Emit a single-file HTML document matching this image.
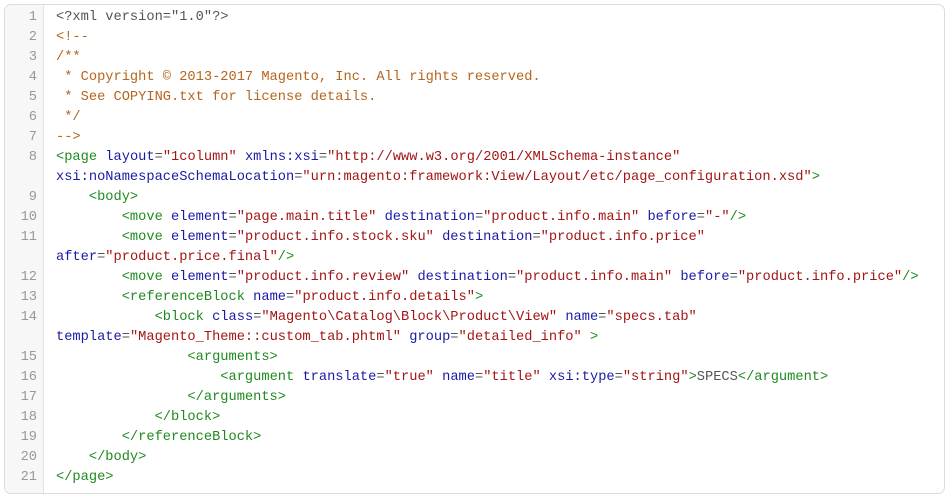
<!DOCTYPE html>
<html><head><meta charset="utf-8"><style>
html,body{margin:0;padding:0;background:#fff;width:950px;height:499px;overflow:hidden}
.box{position:absolute;left:4px;top:4px;width:939px;height:488px;border:1px solid #dcdcdc;border-radius:7px;overflow:hidden;background:#fff}
.gut{position:absolute;left:0;top:0;width:38px;height:100%;background:#f7f7f7;border-right:1px solid #e3e3e3}
.rows{position:absolute;left:0;top:3px;width:100%}
.r{position:relative;font-family:"Liberation Mono",monospace;font-size:13.7px;line-height:20px;white-space:pre;color:#555}
.n{position:absolute;left:0;width:32px;text-align:right;color:#999}
.c{margin-left:51px}
.t{color:#1f8a1f}.a{color:#1a1aa6}.v{color:#a31515}.m{color:#b5651d}
</style></head><body>
<div class="box"><div class="gut"></div><div class="rows">
<div class="r"><span class="n">1</span><div class="c">&lt;?xml version="1.0"?&gt;</div></div>
<div class="r"><span class="n">2</span><div class="c m">&lt;!--</div></div>
<div class="r"><span class="n">3</span><div class="c m">/**</div></div>
<div class="r"><span class="n">4</span><div class="c m"> * Copyright © 2013-2017 Magento, Inc. All rights reserved.</div></div>
<div class="r"><span class="n">5</span><div class="c m"> * See COPYING.txt for license details.</div></div>
<div class="r"><span class="n">6</span><div class="c m"> */</div></div>
<div class="r"><span class="n">7</span><div class="c m">--&gt;</div></div>
<div class="r"><span class="n">8</span><div class="c"><span class="t">&lt;page</span> <span class="a">layout</span>=<span class="v">"1column"</span> <span class="a">xmlns:xsi</span>=<span class="v">"http://www.w3.org/2001/XMLSchema-instance"</span>
<span class="a">xsi:noNamespaceSchemaLocation</span>=<span class="v">"urn:magento:framework:View/Layout/etc/page_configuration.xsd"</span><span class="t">&gt;</span></div></div>
<div class="r"><span class="n">9</span><div class="c">    <span class="t">&lt;body&gt;</span></div></div>
<div class="r"><span class="n">10</span><div class="c">        <span class="t">&lt;move</span> <span class="a">element</span>=<span class="v">"page.main.title"</span> <span class="a">destination</span>=<span class="v">"product.info.main"</span> <span class="a">before</span>=<span class="v">"-"</span><span class="t">/&gt;</span></div></div>
<div class="r"><span class="n">11</span><div class="c">        <span class="t">&lt;move</span> <span class="a">element</span>=<span class="v">"product.info.stock.sku"</span> <span class="a">destination</span>=<span class="v">"product.info.price"</span>
<span class="a">after</span>=<span class="v">"product.price.final"</span><span class="t">/&gt;</span></div></div>
<div class="r"><span class="n">12</span><div class="c">        <span class="t">&lt;move</span> <span class="a">element</span>=<span class="v">"product.info.review"</span> <span class="a">destination</span>=<span class="v">"product.info.main"</span> <span class="a">before</span>=<span class="v">"product.info.price"</span><span class="t">/&gt;</span></div></div>
<div class="r"><span class="n">13</span><div class="c">        <span class="t">&lt;referenceBlock</span> <span class="a">name</span>=<span class="v">"product.info.details"</span><span class="t">&gt;</span></div></div>
<div class="r"><span class="n">14</span><div class="c">            <span class="t">&lt;block</span> <span class="a">class</span>=<span class="v">"Magento\Catalog\Block\Product\View"</span> <span class="a">name</span>=<span class="v">"specs.tab"</span>
<span class="a">template</span>=<span class="v">"Magento_Theme::custom_tab.phtml"</span> <span class="a">group</span>=<span class="v">"detailed_info"</span> <span class="t">&gt;</span></div></div>
<div class="r"><span class="n">15</span><div class="c">                <span class="t">&lt;arguments&gt;</span></div></div>
<div class="r"><span class="n">16</span><div class="c">                    <span class="t">&lt;argument</span> <span class="a">translate</span>=<span class="v">"true"</span> <span class="a">name</span>=<span class="v">"title"</span> <span class="a">xsi:type</span>=<span class="v">"string"</span><span class="t">&gt;</span>SPECS<span class="t">&lt;/argument&gt;</span></div></div>
<div class="r"><span class="n">17</span><div class="c">                <span class="t">&lt;/arguments&gt;</span></div></div>
<div class="r"><span class="n">18</span><div class="c">            <span class="t">&lt;/block&gt;</span></div></div>
<div class="r"><span class="n">19</span><div class="c">        <span class="t">&lt;/referenceBlock&gt;</span></div></div>
<div class="r"><span class="n">20</span><div class="c">    <span class="t">&lt;/body&gt;</span></div></div>
<div class="r"><span class="n">21</span><div class="c"><span class="t">&lt;/page&gt;</span></div></div>
</div></div>
</body></html>
